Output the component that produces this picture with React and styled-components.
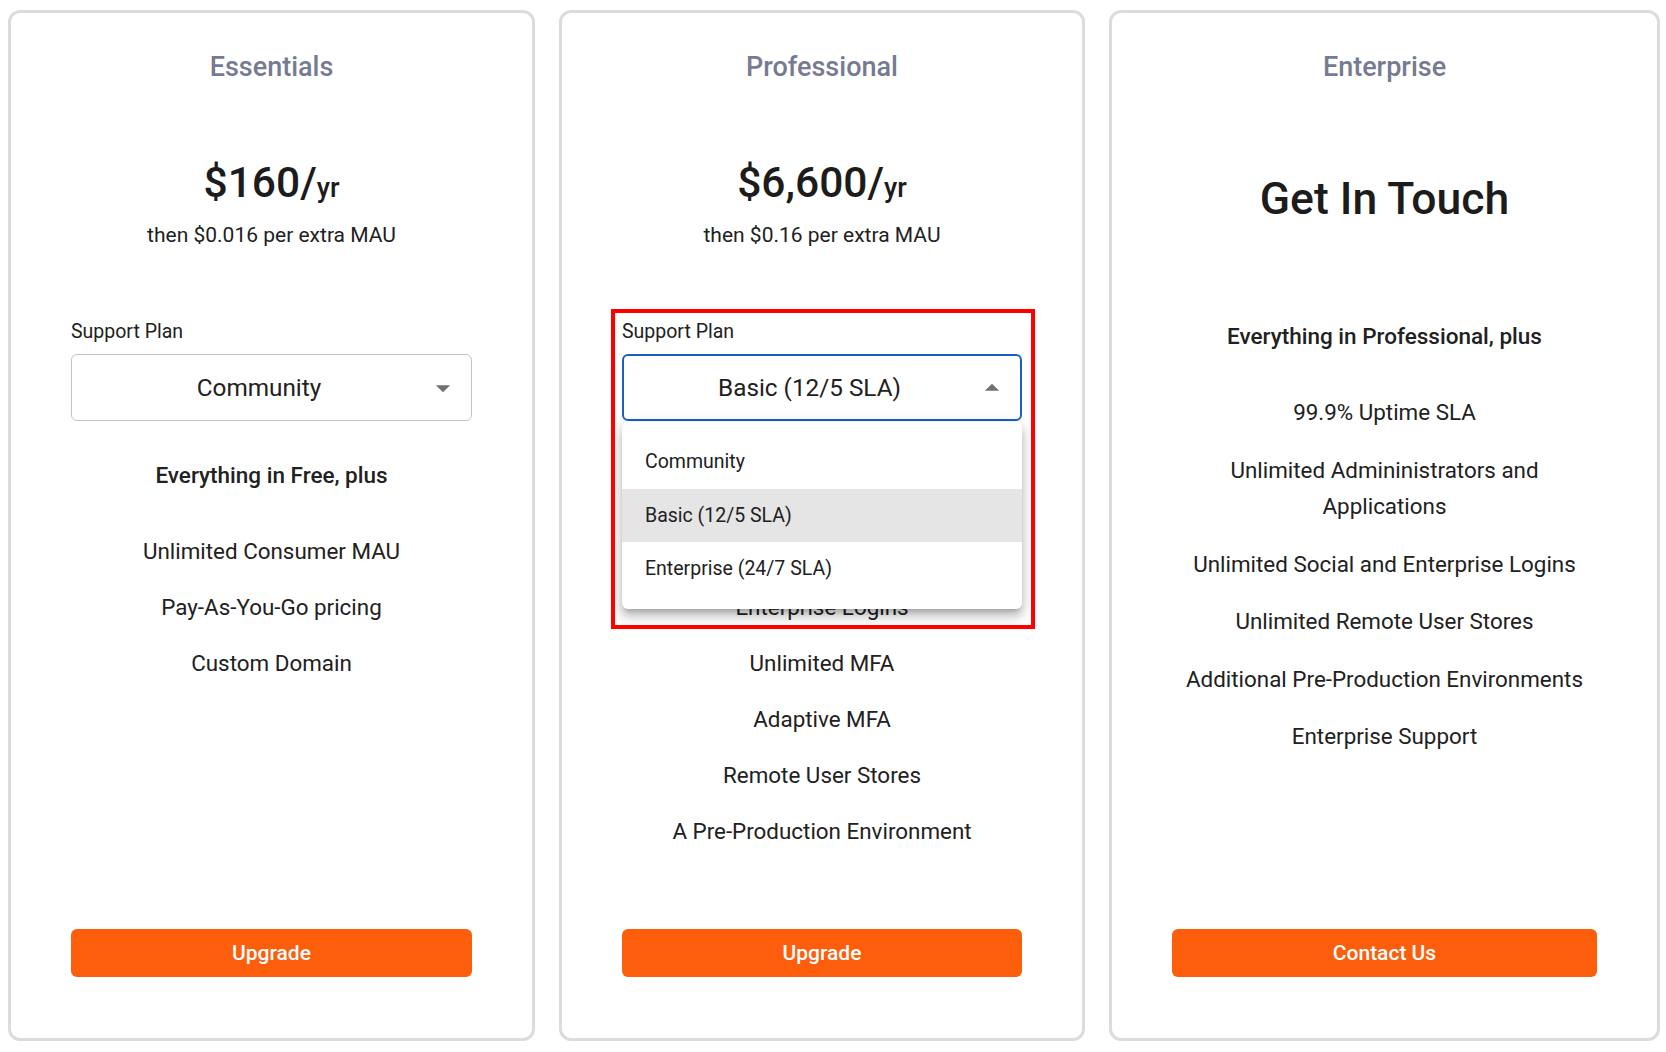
import React from "react";
import styled, { createGlobalStyle } from "styled-components";

const GlobalStyle = createGlobalStyle`
  html, body {
    margin: 0;
    padding: 0;
    background: #fff;
  }
  body {
    font-family: Roboto, "Liberation Sans", Arial, sans-serif;
    color: #212121;
  }
  * {
    box-sizing: border-box;
  }
`;

const Page = styled.div`
  height: 100vh;
  padding: 10px 6px 11px 8px;
  display: grid;
  grid-template-columns: 527fr 526fr 551fr;
  column-gap: 24px;
`;

const Card = styled.div`
  border: 3px solid #dcdcdc;
  border-radius: 12px;
  padding: 37px 60px 61px;
  display: flex;
  flex-direction: column;
  text-align: center;
  min-width: 0;
`;

const Title = styled.div`
  font-size: 27px;
  font-weight: 500;
  line-height: 34px;
  color: #767b91;
`;

const PriceArea = styled.div`
  margin-top: 73px;
  height: 93px;
  padding-top: ${(p) => (p.$contact ? 16 : 0)}px;
`;

const Price = styled.div`
  font-size: 42.5px;
  font-weight: 500;
  line-height: 52px;
  color: #1c1c1c;
`;

const Unit = styled.span`
  font-size: 27px;
`;

const PriceNote = styled.div`
  margin-top: 6px;
  font-size: 21px;
  line-height: 30px;
`;

const Contact = styled.div`
  font-size: 44.5px;
  font-weight: 500;
  line-height: 52px;
  color: #1c1c1c;
`;

const Support = styled.div`
  position: relative;
  margin-top: 69px;
  text-align: left;
`;

const Label = styled.div`
  font-size: 19.5px;
  line-height: 26px;
`;

const SelectWrap = styled.div`
  position: relative;
  margin-top: 9px;
`;

const SelectBox = styled.div`
  position: relative;
  height: 67px;
  border: ${(p) => (p.$open ? "2px solid #1b5fc6" : "1px solid #c4c4c4")};
  border-radius: 6px;
  display: flex;
  align-items: center;
  justify-content: center;
  padding: 0 45px 0 20px;
  font-size: 24.3px;
  color: #212121;
`;

const Caret = styled.svg`
  position: absolute;
  right: 11px;
  top: 50%;
  transform: translateY(-50%);
  width: 34px;
  height: 34px;
  fill: #707070;
`;

const Menu = styled.ul`
  position: absolute;
  top: calc(100% + 1px);
  left: 0;
  right: 0;
  margin: 0;
  padding: 13px 0;
  list-style: none;
  background: #fff;
  border-radius: 6px;
  box-shadow: 0 5px 5px -3px rgba(0, 0, 0, 0.2), 0 8px 10px 1px rgba(0, 0, 0, 0.14),
    0 3px 14px 2px rgba(0, 0, 0, 0.12);
  z-index: 2;
`;

const MenuItem = styled.li`
  height: 53.5px;
  display: flex;
  align-items: center;
  padding-left: 23px;
  font-size: 19.5px;
  color: #212121;
  background: ${(p) => (p.$selected ? "#e5e5e5" : "transparent")};
`;

const Highlight = styled.div`
  position: absolute;
  top: -10px;
  left: -11px;
  right: -13px;
  height: 320px;
  border: 4px solid #ff0000;
  pointer-events: none;
  z-index: 3;
`;

const Lead = styled.div`
  margin-top: ${(p) => p.$mt || 36}px;
  font-size: 22.5px;
  font-weight: 500;
  line-height: 36px;
`;

const Features = styled.div`
  margin-top: 40px;
  display: flex;
  flex-direction: column;
  gap: ${(p) => p.$gap || 19.5}px;
`;

const Feature = styled.div`
  font-size: 22.4px;
  line-height: 36.5px;
`;

const Action = styled.button`
  margin-top: auto;
  height: 48px;
  width: 100%;
  border: none;
  border-radius: 6px;
  background: #fd5e0b;
  color: #fff;
  font-family: inherit;
  font-size: 21px;
  font-weight: 500;
  cursor: pointer;
`;

const options = ["Community", "Basic (12/5 SLA)", "Enterprise (24/7 SLA)"];

function PlanSelect({ value, open }) {
  return (
    <Support>
      <Label>Support Plan</Label>
      <SelectWrap>
        <SelectBox $open={open}>
          {value}
          <Caret viewBox="0 0 24 24">
            <path d={open ? "M7 14l5-5 5 5z" : "M7 10l5 5 5-5z"} />
          </Caret>
        </SelectBox>
        {open && (
          <Menu>
            {options.map((o) => (
              <MenuItem key={o} $selected={o === value}>
                {o}
              </MenuItem>
            ))}
          </Menu>
        )}
      </SelectWrap>
      {open && <Highlight />}
    </Support>
  );
}

const plans = [
  {
    name: "Essentials",
    price: "$160",
    note: "then $0.016 per extra MAU",
    support: "Community",
    lead: "Everything in Free, plus",
    features: ["Unlimited Consumer MAU", "Pay-As-You-Go pricing", "Custom Domain"],
    action: "Upgrade",
  },
  {
    name: "Professional",
    price: "$6,600",
    note: "then $0.16 per extra MAU",
    support: "Basic (12/5 SLA)",
    open: true,
    lead: "Everything in Essentials, plus",
    features: [
      "Social Logins",
      "Enterprise Logins",
      "Unlimited MFA",
      "Adaptive MFA",
      "Remote User Stores",
      "A Pre-Production Environment",
    ],
    action: "Upgrade",
  },
  {
    name: "Enterprise",
    contact: "Get In Touch",
    lead: "Everything in Professional, plus",
    features: [
      "99.9% Uptime SLA",
      "Unlimited Admininistrators and Applications",
      "Unlimited Social and Enterprise Logins",
      "Unlimited Remote User Stores",
      "Additional Pre-Production Environments",
      "Enterprise Support",
    ],
    action: "Contact Us",
  },
];

export default function App() {
  return (
    <>
      <GlobalStyle />
      <Page>
        {plans.map((plan) => (
          <Card key={plan.name}>
            <Title>{plan.name}</Title>
            {plan.contact ? (
              <PriceArea $contact>
                <Contact>{plan.contact}</Contact>
              </PriceArea>
            ) : (
              <PriceArea>
                <Price>
                  {plan.price}/<Unit>yr</Unit>
                </Price>
                <PriceNote>{plan.note}</PriceNote>
              </PriceArea>
            )}
            {plan.support && <PlanSelect value={plan.support} open={plan.open} />}
            <Lead $mt={plan.contact ? 68 : 36}>{plan.lead}</Lead>
            <Features $gap={plan.contact ? 21 : 19.5}>
              {plan.features.map((f) => (
                <Feature key={f}>{f}</Feature>
              ))}
            </Features>
            <Action>{plan.action}</Action>
          </Card>
        ))}
      </Page>
    </>
  );
}
